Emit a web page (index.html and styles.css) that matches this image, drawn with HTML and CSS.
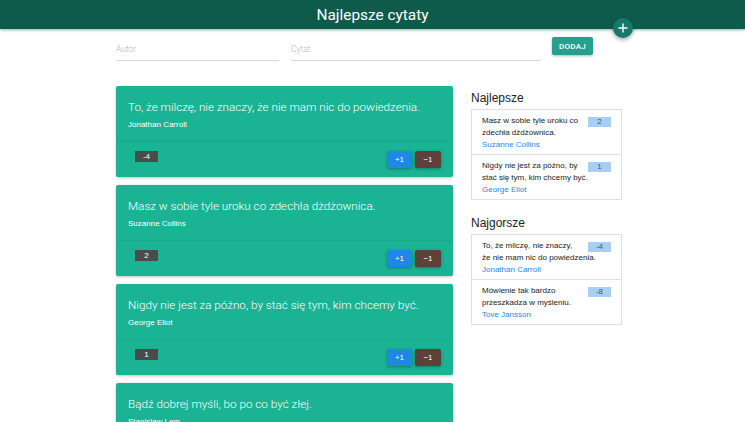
FILE: index.html
```html
<!DOCTYPE html>
<html lang="pl">
<head>
<meta charset="utf-8">
<title>Najlepsze cytaty</title>
<link rel="stylesheet" href="styles.css">
</head>
<body>
<header class="topbar">
  <h1 class="title">Najlepsze cytaty</h1>
  <button class="fab" aria-label="Dodaj">
    <svg width="10" height="10" viewBox="0 0 10 10"><path d="M5 0.5V9.5M0.5 5H9.5" stroke="#fff" stroke-width="1.4"/></svg>
  </button>
</header>
<main class="container">
  <form class="add-form">
    <input class="field field-author" placeholder="Autor">
    <input class="field field-quote" placeholder="Cytat">
    <button type="button" class="btn-add">DODAJ</button>
  </form>
  <div class="layout">
    <section class="cards">
      <article class="card">
        <div class="card-content">
          <p class="quote">To, że milczę, nie znaczy, że nie mam nic do powiedzenia.</p>
          <p class="author">Jonathan Carroll</p>
        </div>
        <div class="card-action">
          <span class="score">-4</span>
          <div class="votes"><button class="vote up">+1</button><button class="vote down">−1</button></div>
        </div>
      </article>
      <article class="card">
        <div class="card-content">
          <p class="quote">Masz w sobie tyle uroku co zdechła dżdżownica.</p>
          <p class="author">Suzanne Collins</p>
        </div>
        <div class="card-action">
          <span class="score">2</span>
          <div class="votes"><button class="vote up">+1</button><button class="vote down">−1</button></div>
        </div>
      </article>
      <article class="card">
        <div class="card-content">
          <p class="quote">Nigdy nie jest za późno, by stać się tym, kim chcemy być.</p>
          <p class="author">George Eliot</p>
        </div>
        <div class="card-action">
          <span class="score">1</span>
          <div class="votes"><button class="vote up">+1</button><button class="vote down">−1</button></div>
        </div>
      </article>
      <article class="card">
        <div class="card-content">
          <p class="quote">Bądź dobrej myśli, bo po co być złej.</p>
          <p class="author">Stanisław Lem</p>
        </div>
        <div class="card-action">
          <span class="score">0</span>
          <div class="votes"><button class="vote up">+1</button><button class="vote down">−1</button></div>
        </div>
      </article>
    </section>
    <aside class="side">
      <h2 class="side-title">Najlepsze</h2>
      <ul class="collection">
        <li class="item"><span class="badge">2</span>Masz w sobie tyle uroku co zdechła dżdżownica.<br><a class="who">Suzanne Collins</a></li>
        <li class="item"><span class="badge">1</span>Nigdy nie jest za późno, by stać się tym, kim chcemy być.<br><a class="who">George Eliot</a></li>
      </ul>
      <h2 class="side-title second">Najgorsze</h2>
      <ul class="collection">
        <li class="item"><span class="badge">-4</span>To, że milczę, nie znaczy, że nie mam nic do powiedzenia.<br><a class="who">Jonathan Carroll</a></li>
        <li class="item"><span class="badge">-8</span>Mówienie tak bardzo przeszkadza w myśleniu.<br><a class="who">Tove Jansson</a></li>
      </ul>
    </aside>
  </div>
</main>
</body>
</html>
```
FILE: styles.css
```css
* { box-sizing: border-box; }
html, body { margin: 0; padding: 0; background: #fff; overflow: hidden; }
body { font-family: "Liberation Sans", Arial, sans-serif; color: #222; }

.topbar {
  position: relative;
  height: 29px;
  background: #0e5b4c;
  box-shadow: 0 1px 3px rgba(0,0,0,0.35);
  display: flex;
  align-items: center;
  justify-content: center;
  z-index: 2;
}
.title {
  margin: 0;
  font-family: Roboto, sans-serif;
  font-weight: 400;
  font-size: 15.4px;
  line-height: 20px;
  color: #fff;
  padding-top: 1px;
}
.fab {
  position: absolute;
  left: 613px;
  top: 18px;
  width: 20px;
  height: 20px;
  border-radius: 50%;
  border: 0;
  padding: 0;
  background: #16796a;
  box-shadow: 0 2px 4px rgba(0,0,0,0.35);
  display: flex;
  align-items: center;
  justify-content: center;
}

.container { width: 506px; margin: 0 0 0 116px; }

.add-form {
  display: flex;
  align-items: flex-start;
  padding-top: 8px;
}
.field {
  margin-top: 1px;
  height: 23px;
  border: 0;
  border-bottom: 1px solid #d6d6d6;
  font-family: Roboto, sans-serif;
  font-weight: 300;
  font-size: 8.5px;
  padding: 0;
  outline: none;
  background: transparent;
}
.field::placeholder { color: #b5b5b5; }
.field-author { width: 163px; margin-right: 12px; }
.field-quote { width: 250px; margin-right: 11px; }
.btn-add {
  width: 41px;
  height: 18px;
  border: 0;
  border-radius: 2px;
  background: #26a08e;
  color: #fff;
  font-family: Roboto, sans-serif;
  font-weight: 500;
  font-size: 8px;
  letter-spacing: 0.3px;
  padding: 0;
  box-shadow: 0 1px 3px rgba(0,0,0,0.3);
}

.layout {
  display: grid;
  grid-template-columns: 337px 151px;
  column-gap: 18px;
  margin-top: 25px;
}
.cards { display: flex; flex-direction: column; gap: 8px; }
.card {
  background: #1ab394;
  border-radius: 2px;
  box-shadow: 0 1px 3px rgba(0,0,0,0.25);
  color: #fff;
}
.card-content {
  padding: 13px 12px 10px;
  border-bottom: 1px solid rgba(0,0,0,0.05);
}
.quote {
  margin: 0;
  font-family: "Helvetica Neue", Roboto, sans-serif;
  font-weight: 300;
  font-size: 11.7px;
  line-height: 16px;
}
.author {
  margin: 4px 0 0;
  font-size: 8px;
  line-height: 12px;
}
.card-action {
  height: 35px;
  display: flex;
  justify-content: space-between;
  align-items: flex-start;
  padding: 9px 12px 0 19px;
}
.score {
  width: 23px;
  height: 11px;
  background: #4b4b4b;
  color: #fff;
  font-size: 8px;
  line-height: 11px;
  text-align: center;
}
.votes { display: flex; gap: 3px; }
.vote {
  height: 17px;
  border: 0;
  border-radius: 2px;
  color: #fff;
  font-family: "Liberation Sans", Arial, sans-serif;
  font-size: 8px;
  padding: 0;
  box-shadow: 0 1px 3px rgba(0,0,0,0.3);
}
.vote.up { width: 25px; background: #1e88e5; }
.vote.down { width: 26px; background: #5d4037; }

.side-title {
  margin: 5px 0 4px;
  font-weight: 400;
  font-size: 12px;
  line-height: 14px;
  color: #222;
}
.side-title.second { margin-top: 16px; }
.collection {
  list-style: none;
  margin: 0;
  padding: 0;
  border: 1px solid #e0e0e0;
}
.item {
  padding: 5px 10px 3px;
  font-size: 8px;
  line-height: 12px;
  color: #222;
  border-bottom: 1px solid #e0e0e0;
}
.item:last-child { border-bottom: 0; }
.badge {
  float: right;
  width: 23px;
  height: 10px;
  margin: 2px 0 0 6px;
  background: #a6cff5;
  color: #555;
  font-size: 8px;
  line-height: 10px;
  text-align: center;
}
.who { color: #1e88e5; }
```
